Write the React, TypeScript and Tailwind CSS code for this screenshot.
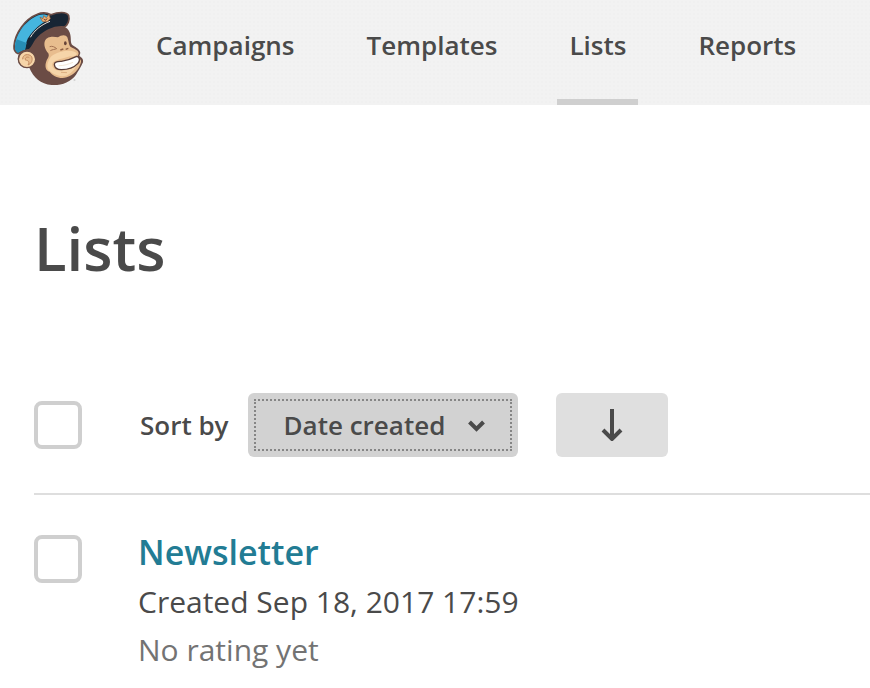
import React from "react";

function Logo() {
  return (
    <svg className="h-[105px] w-[96px] shrink-0" viewBox="0 0 288 315" role="img" aria-label="MailChimp">
      {/* head */}
      <path d="M84 150 C92 110 118 88 150 78 C180 70 207 80 211 104 C214 118 210 128 218 136 C230 143 240 150 241 159 L238 168 C245 172 251 178 249 187 C242 204 234 214 228 224 C212 246 184 257 155 255 C122 252 100 232 88 203 C74 205 57 198 54 181 C51 164 61 152 84 150 Z" fill="#6b4c45" />
      {/* face */}
      <path d="M135 122 C142 107 162 109 174 112 C184 104 198 104 202 112 C207 126 206 138 214 142 C225 148 235 151 236 160 C235 166 231 169 236 173 C242 178 245 182 242 190 C236 208 222 226 200 232 C180 238 158 229 149 215 C136 213 134 197 139 184 C143 174 149 170 145 160 C136 150 130 134 135 122 Z" fill="#e8bd8e" />
      <path d="M147 179 C155 162 176 157 194 153 C211 150 227 154 231 161 C228 168 220 170 210 169 C190 175 168 180 160 186 C153 194 158 207 171 211 C190 214 216 208 230 196 C222 214 205 229 187 229 C167 227 148 217 143 205 C140 195 143 188 147 179 Z" fill="#f6d5a9" />
      {/* smile */}
      <path d="M163 194 C162 185 174 185 184 184 C204 181 220 174 230 169 C240 170 241 184 233 191 C220 205 202 209 184 209 C172 209 164 204 163 194 Z" fill="#fff" stroke="#593d38" strokeWidth="4" />
      <path d="M176 197 C190 198 207 192 219 187" fill="none" stroke="#f3e6d6" strokeWidth="3" />
      {/* features */}
      <path d="M149 140 C157 137 164 141 170 146 M151 152 C158 148 163 149 170 146" fill="none" stroke="#a57352" strokeWidth="3" />
      <ellipse cx="196" cy="130" rx="4" ry="6" fill="#664338" />
      <path d="M181 150 L190 147 M197 148 L205 145" fill="none" stroke="#8f5f44" strokeWidth="4" />
      <path d="M183 217 L201 218" fill="none" stroke="#d09c6c" strokeWidth="2" />
      {/* cap */}
      <path d="M42 138 C45 98 76 57 112 43 C126 37 143 39 153 44 C174 36 200 34 206 47 C210 60 203 76 193 81 C160 77 128 96 108 120 C100 131 97 143 88 149 C75 151 66 153 55 161 C45 157 41 150 42 138 Z" fill="#172534" stroke="#6b4c45" strokeWidth="5" />
      <path d="M45 138 C48 100 78 60 115 46 C125 42 140 43 148 49 L149 58 C126 67 101 88 83 116 C78 126 77 139 75 149 C63 151 59 155 54 158 C47 154 44 148 45 138 Z" fill="#45b5df" />
      <path d="M45 138 L50 118 L80 129 L75 149 C63 151 59 155 54 158 C47 154 44 148 45 138 Z" fill="#278db5" />
      <path d="M91 112 C104 90 124 74 150 64" fill="none" stroke="#e9e5dd" strokeWidth="3" />
      <path d="M120 52 L129 56 L131 47 L139 53 L147 43 L151 56 L142 65 L128 65 Z" fill="#e9ac6e" stroke="#8c593d" strokeWidth="2" />
      <path d="M132 57 L135 61 L142 56" fill="none" stroke="#70483b" strokeWidth="3" />
      {/* ear */}
      <ellipse cx="81" cy="178" rx="26" ry="25" fill="#f6d5a9" stroke="#6b4c45" strokeWidth="4" />
      <path d="M68 178 C67 163 86 159 95 170 C99 181 94 191 84 195 C90 186 85 181 76 180 C75 172 82 169 88 173" fill="#e8bd8e" stroke="#c58d63" strokeWidth="3" />
      <path d="M221 240 H226" stroke="#999" strokeWidth="2" />
    </svg>
  );
}

const navItems = ["Campaigns", "Templates", "Lists", "Reports"];

const checkboxClass =
  "block size-12 shrink-0 appearance-none rounded-lg border-4 border-[#cfcfcf] bg-white checked:bg-[#4a4a4a]";

export default function App() {
  return (
    <div className="min-h-screen bg-white font-['Open_Sans','Noto_Sans',sans-serif] text-[#4a4a4a]">
      <header className="flex h-[105px] items-stretch bg-[#f2f2f2] bg-[radial-gradient(#f0f0f0_1px,transparent_1px)] bg-[size:4px_4px]">
        <Logo />
        <nav aria-label="Main" className="ml-12 flex gap-12">
          {navItems.map((item) => (
            <a
              key={item}
              href={"#" + item.toLowerCase()}
              aria-current={item === "Lists" ? "page" : undefined}
              className="border-b-[6px] border-transparent px-3 pt-7 text-[26px] leading-[34px] font-semibold aria-[current=page]:border-[#cfcfcf]"
            >
              {item}
            </a>
          ))}
        </nav>
      </header>

      <main className="pl-[34px]">
        <h1 className="pt-[108px] text-[60px] leading-[70px] font-semibold">Lists</h1>

        <div className="mt-[110px] flex items-center border-b-2 border-[#dedede] pb-9">
          <input type="checkbox" aria-label="Select all lists" className={checkboxClass} />
          <label htmlFor="sort" className="ml-[58px] text-[26px] leading-9 font-semibold">
            Sort by
          </label>
          <div className="relative ml-[19px]">
            <select
              id="sort"
              defaultValue="created"
              className="block h-16 w-[270px] appearance-none rounded-md bg-[#d2d2d2] pl-9 text-[26px] leading-9 font-semibold outline-2 -outline-offset-8 outline-[#858585] outline-dotted"
            >
              <option value="created">Date created</option>
            </select>
            <svg
              className="pointer-events-none absolute top-[27px] right-8 h-3 w-[18px]"
              viewBox="0 0 18 12"
              fill="none"
              stroke="#4a4a4a"
              strokeWidth="4"
              aria-hidden="true"
            >
              <path d="M1.5 2 L8.5 9 L15.5 2" />
            </svg>
          </div>
          <button
            type="button"
            aria-label="Sort descending"
            className="ml-[38px] flex h-16 w-28 items-center justify-center rounded-md bg-[#dfdfdf]"
          >
            <svg className="h-8 w-6" viewBox="0 0 24 32" fill="none" stroke="#4a4a4a" strokeWidth="4" aria-hidden="true">
              <path d="M12 0 V29 M3 21 L12 30 L21 21" />
            </svg>
          </button>
        </div>

        <div className="flex items-start pt-10">
          <input id="newsletter" type="checkbox" aria-label="Select Newsletter" className={checkboxClass} />
          <div className="-mt-[9px] ml-14">
            <a href="#newsletter" className="block text-[34px] leading-[52px] font-semibold text-[#227c94]">
              Newsletter
            </a>
            <p className="text-[30px] leading-12">Created Sep 18, 2017 17:59</p>
            <p className="text-[30px] leading-12 text-[#737373]">No rating yet</p>
          </div>
        </div>
      </main>
    </div>
  );
}
